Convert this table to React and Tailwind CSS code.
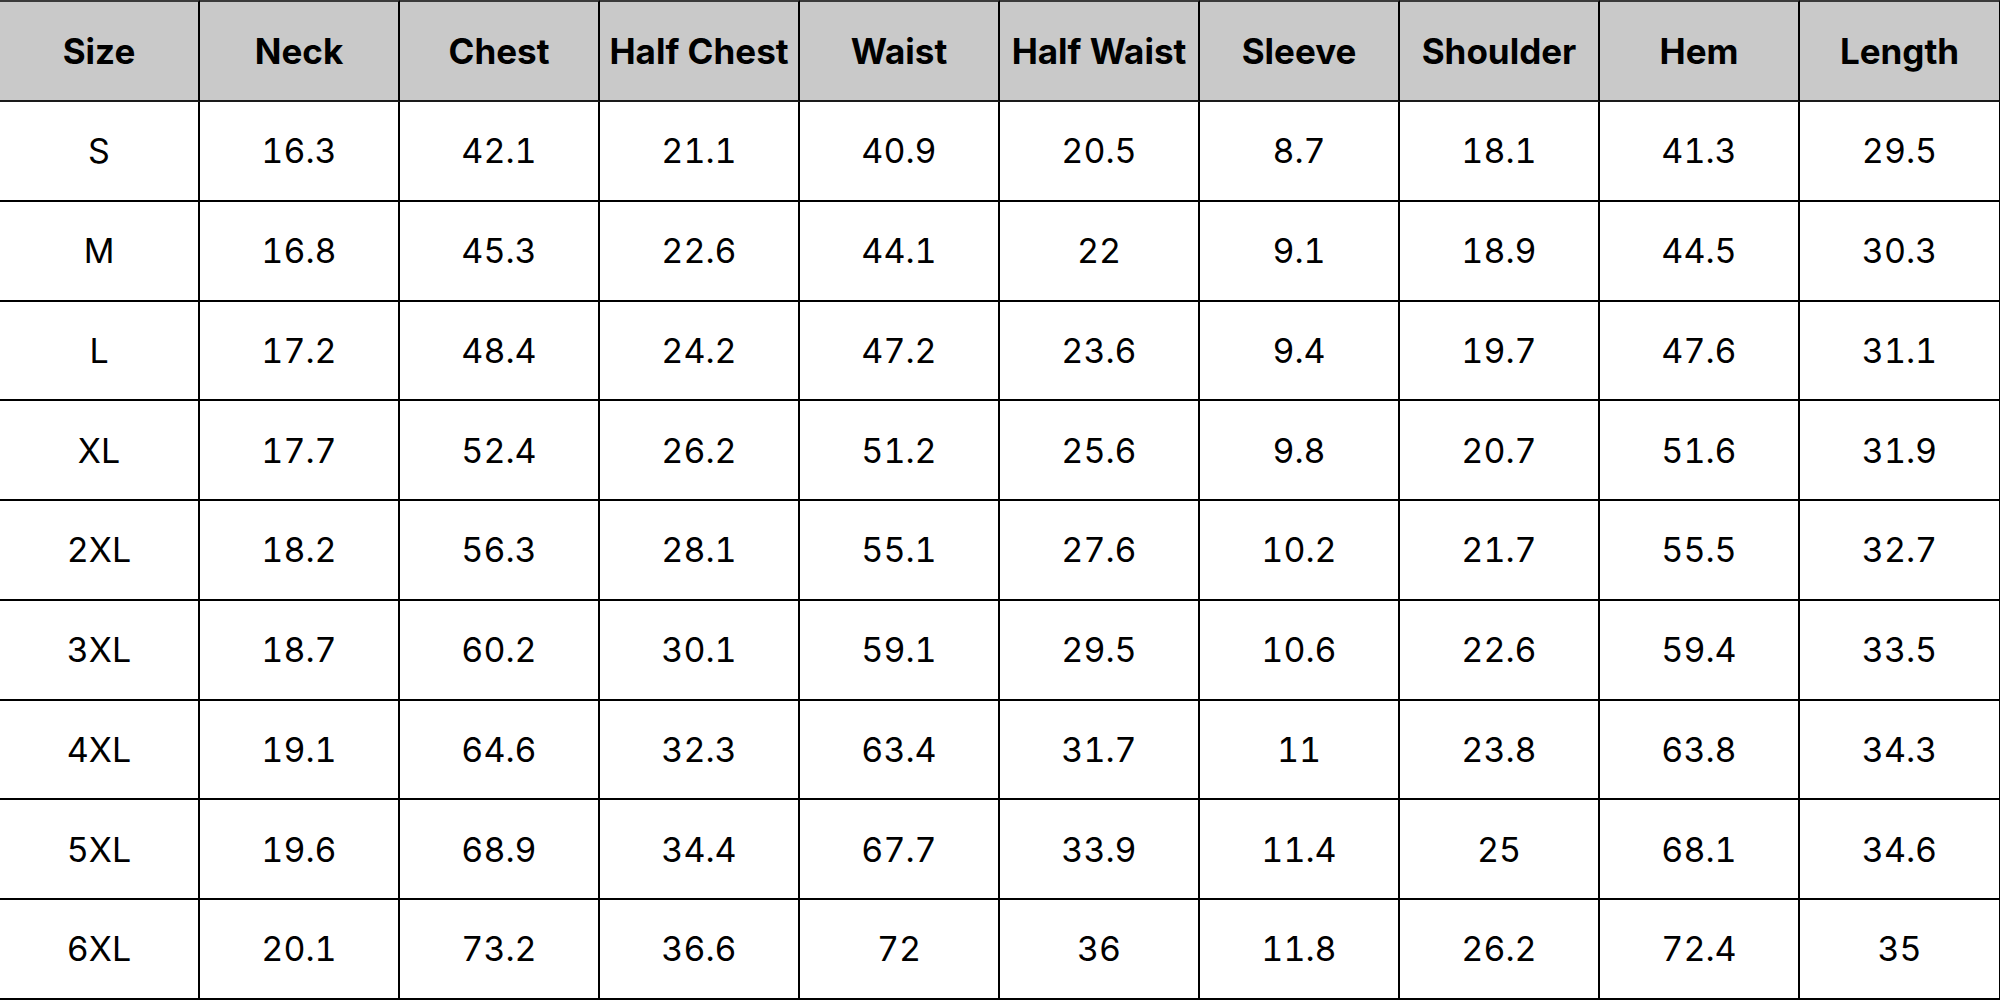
import React from "react";

const headers = ["Size","Neck","Chest","Half Chest","Waist","Half Waist","Sleeve","Shoulder","Hem","Length"];
const rows = [
  ["S","16.3","42.1","21.1","40.9","20.5","8.7","18.1","41.3","29.5"],
  ["M","16.8","45.3","22.6","44.1","22","9.1","18.9","44.5","30.3"],
  ["L","17.2","48.4","24.2","47.2","23.6","9.4","19.7","47.6","31.1"],
  ["XL","17.7","52.4","26.2","51.2","25.6","9.8","20.7","51.6","31.9"],
  ["2XL","18.2","56.3","28.1","55.1","27.6","10.2","21.7","55.5","32.7"],
  ["3XL","18.7","60.2","30.1","59.1","29.5","10.6","22.6","59.4","33.5"],
  ["4XL","19.1","64.6","32.3","63.4","31.7","11","23.8","63.8","34.3"],
  ["5XL","19.6","68.9","34.4","67.7","33.9","11.4","25","68.1","34.6"],
  ["6XL","20.1","73.2","36.6","72","36","11.8","26.2","72.4","35"],
];

export default function App() {
  return (
    <div className="w-[2000px] h-[1000px] bg-white overflow-hidden" style={{ fontFamily: 'Inter, "Liberation Sans", sans-serif' }}>
      <div className="grid grid-cols-[repeat(10,200px)] grid-rows-[102px_repeat(9,99.75px)] text-black">
        {headers.map((h, i) => (
          <div
            key={h}
            className={
              "flex items-center justify-center bg-[#c9c9c9] border-t-2 border-b-2 border-t-[#3a3a3a] border-b-[#1a1a1a] font-bold text-[35px] whitespace-nowrap " +
              (i < 9 ? "border-r-2 border-r-black" : "border-r border-r-black")
            }
          >
            {h}
          </div>
        ))}
        {rows.map((r, ri) =>
          r.map((c, ci) => (
            <div
              key={ri + "-" + ci}
              className={
                "flex items-center justify-center border-b-2 border-b-black text-[34px] tabular-nums " +
                (ci < 9 ? "border-r-2 border-r-black" : "border-r border-r-black")
              }
            >
              {c}
            </div>
          ))
        )}
      </div>
    </div>
  );
}
